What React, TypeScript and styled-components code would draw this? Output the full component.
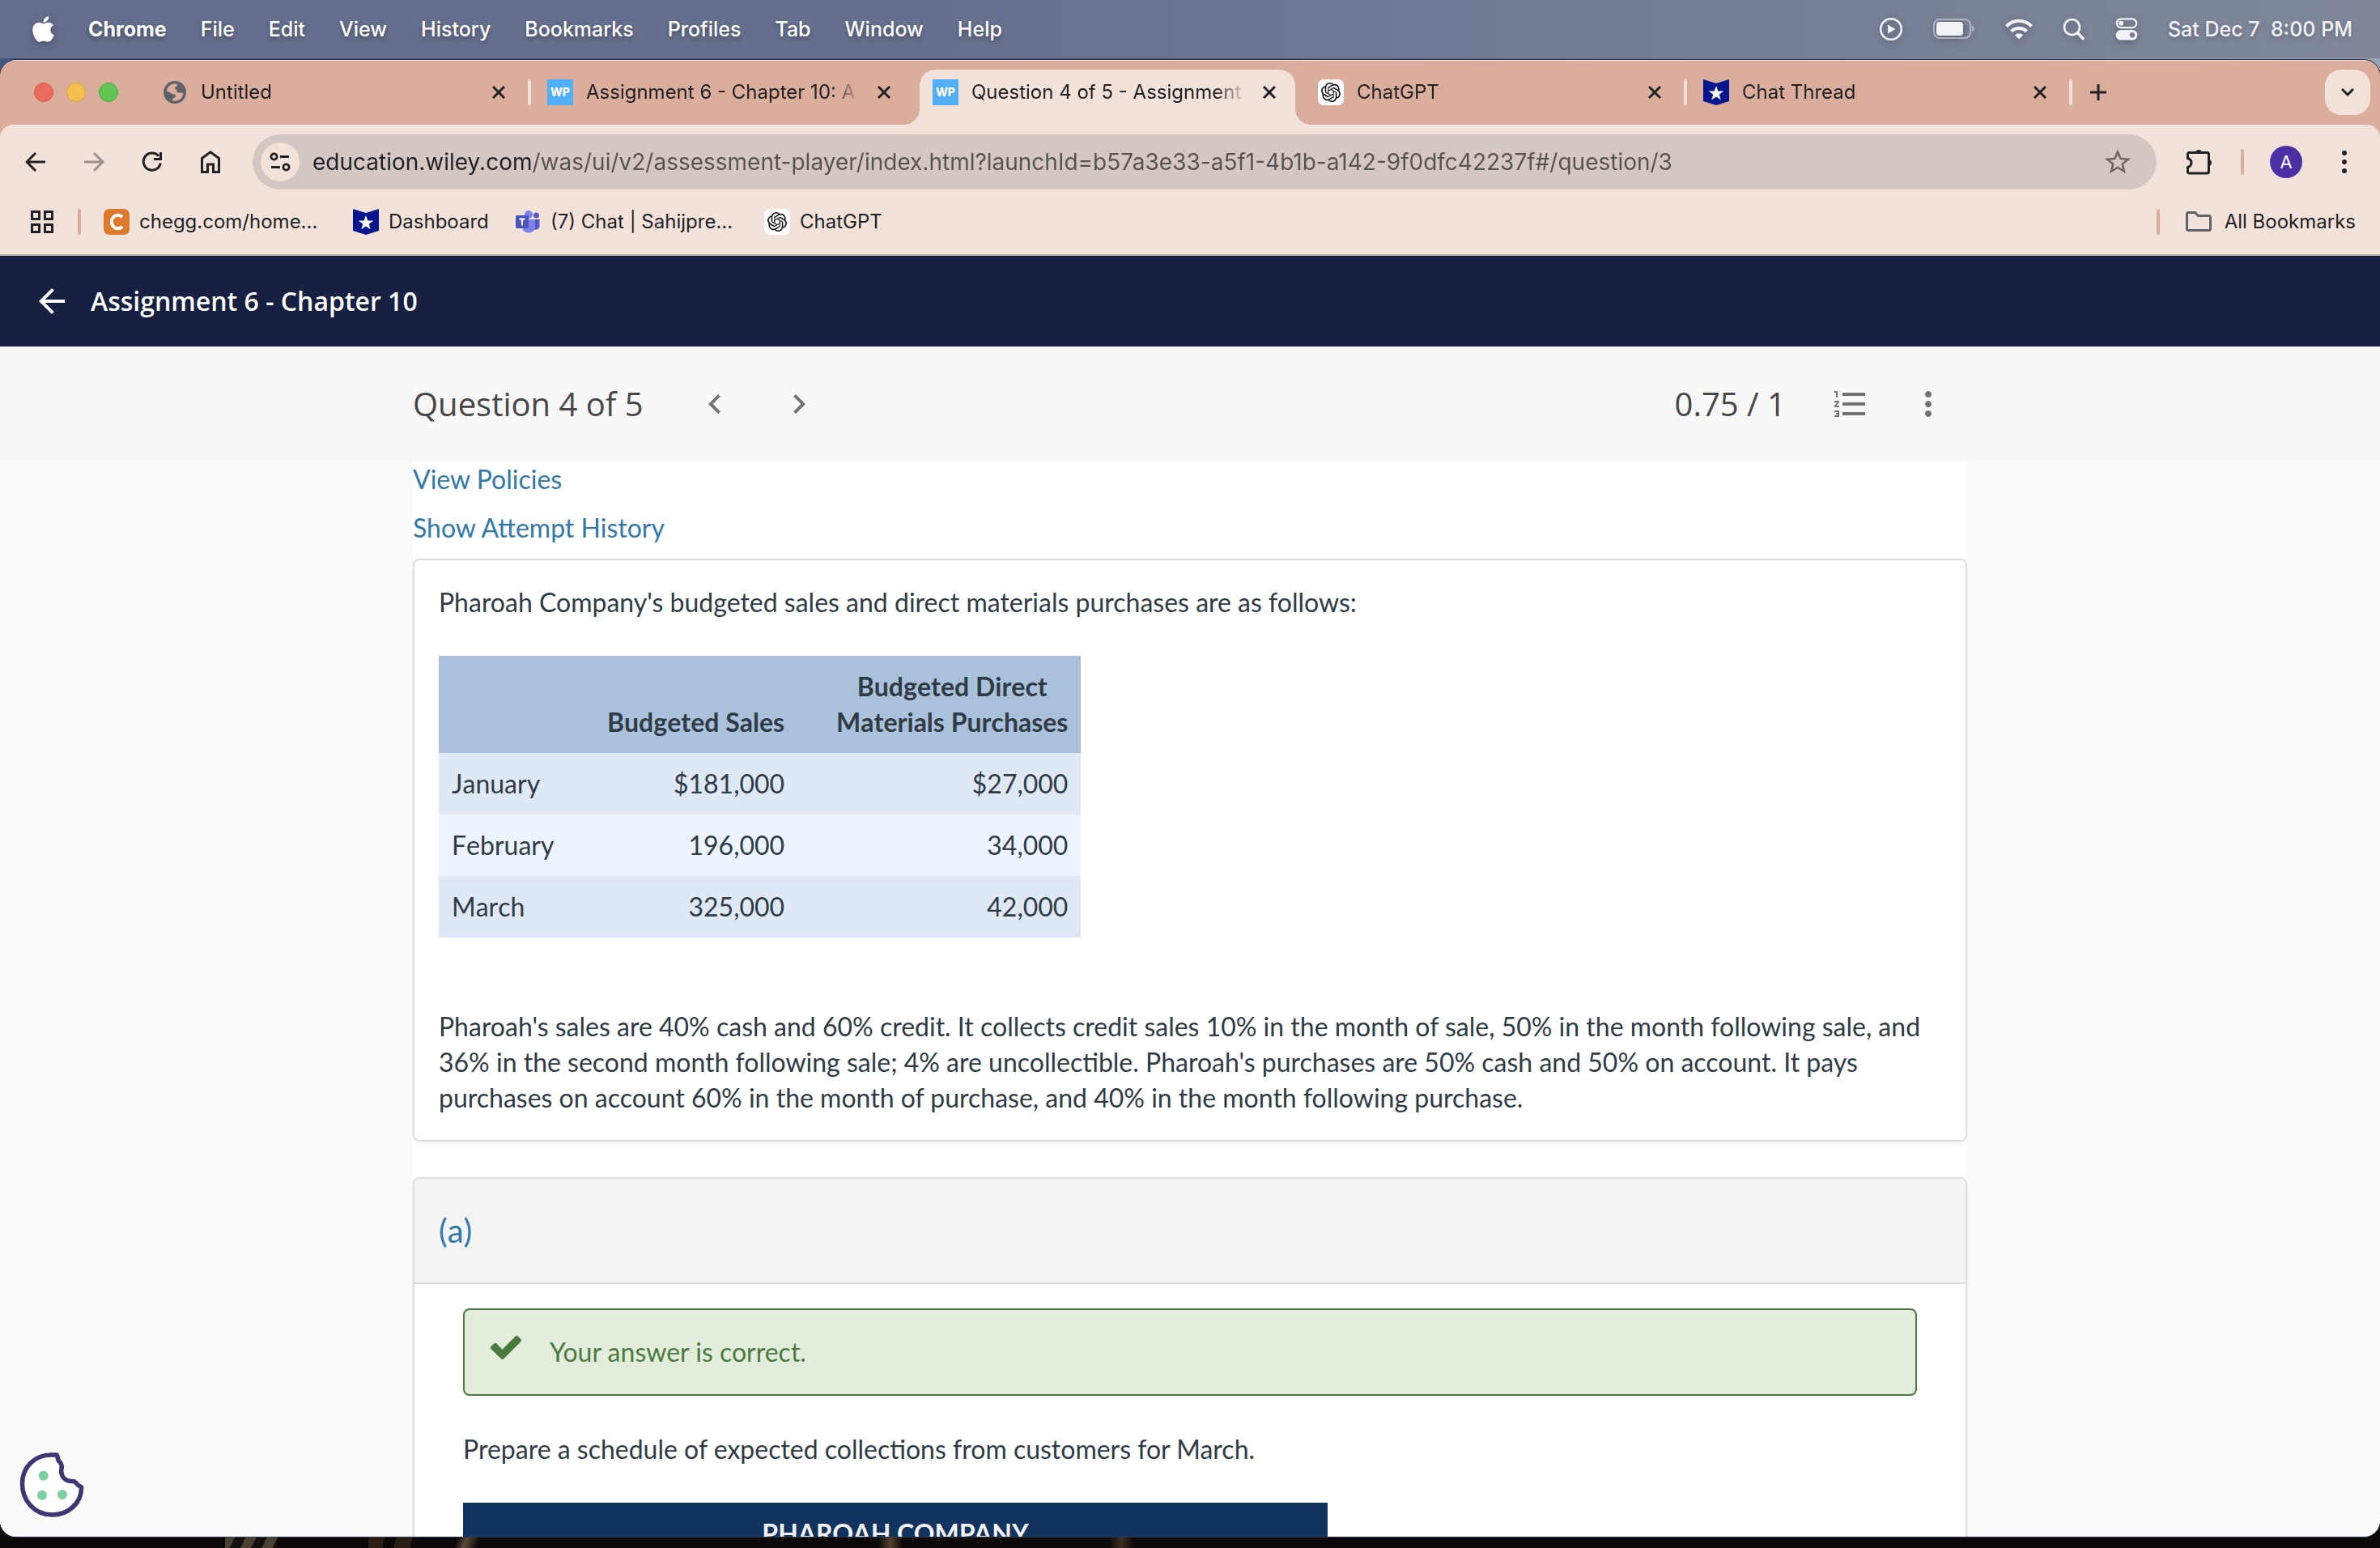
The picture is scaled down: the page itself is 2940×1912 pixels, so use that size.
import React from "react";
import styled, { createGlobalStyle, css } from "styled-components";
import { FaApple } from "react-icons/fa";
import {
  MdArrowBack,
  MdChevronLeft,
  MdChevronRight,
  MdFormatListNumbered,
  MdMoreVert,
  MdStarBorder,
} from "react-icons/md";
import { SiOpenai } from "react-icons/si";

const color = {
  strip: "#dbad9c",
  toolbar: "#f3e2da",
  omnibox: "#d4c6c0",
  ink: "#202124",
  navy: "#171f42",
  link: "#3079ab",
  text: "#2f3b45",
  rule: "#dddddd",
  success: "#4b7a41",
};

const GlobalStyle = createGlobalStyle`
  *, *::before, *::after { box-sizing: border-box; }
  html, body { margin: 0; }
  body { overflow: hidden; }
  svg { display: block; flex: none; }
  button, input { font: inherit; color: inherit; margin: 0; }
  a { text-decoration: none; }
`;

const Desktop = styled.div`
  display: flex;
  flex-direction: column;
  height: 100vh;
  font-family: Inter, "Liberation Sans", sans-serif;
  background:
    repeating-linear-gradient(115deg, #4a4033 0 12px, #15110d 12px 24px) 278px 100% / 64px 16px no-repeat,
    repeating-linear-gradient(100deg, #2b1e16 0 20px, #0d0908 20px 34px) 455px 100% / 60px 16px no-repeat,
    linear-gradient(110deg, #0d0908 30%, #5b4a38 50%, #0d0908 80%) 550px 100% / 50px 16px no-repeat,
    linear-gradient(90deg, #0d0908, #54412f, #0d0908) 1085px 100% / 30px 16px no-repeat,
    linear-gradient(90deg, #0d0908, #3d2f24, #0d0908) 1370px 100% / 30px 16px no-repeat,
    linear-gradient(#0b0807, #0b0807) 0 100% / 100% 50% no-repeat,
    linear-gradient(90deg, #3f5686, #4b5570 50%, #98a2b0);
`;

/* ---------- macOS menu bar ---------- */

const MenuBar = styled.header`
  display: flex;
  align-items: center;
  justify-content: space-between;
  height: 72px;
  padding: 0 34px 0 40px;
  color: #fff;
  font-size: 25px;
  line-height: 32px;
  background: linear-gradient(90deg, #646d8b 0%, #676f8e 40%, #757d96 70%, #7f8799 100%);
  svg { filter: drop-shadow(0 3px 4px rgba(0, 0, 0, 0.25)); }
`;

const Menus = styled.nav`
  display: flex;
  align-items: center;
  gap: 42px;
`;

const AppleLogo = styled(FaApple)`
  width: 27px;
  height: 36px;
`;

const MenuItem = styled.button<{ $app?: boolean }>`
  padding: 0;
  border: 0;
  background: none;
  font-weight: ${(p) => (p.$app ? 700 : 500)};
  text-shadow: 0 3px 5px rgba(0, 0, 0, 0.3);
`;

const StatusItems = styled.div`
  display: flex;
  align-items: center;
  gap: 37px;
  color: #f1f2f5;
`;

const Clock = styled.time`
  font-weight: 500;
  white-space: pre;
  text-shadow: 0 3px 5px rgba(0, 0, 0, 0.2);
`;

/* ---------- browser window ---------- */

const BrowserWindow = styled.div`
  position: relative;
  display: flex;
  flex: 1;
  flex-direction: column;
  min-height: 0;
  margin: 2px 0 14px;
  overflow: hidden;
  border-radius: 20px;
  background: ${color.strip};
  box-shadow: 0 0 0 1px #2b3450;
`;

const TabStrip = styled.div`
  display: flex;
  align-items: center;
  height: 80px;
  padding: 0 12px 0 42px;
  box-shadow: inset 0 2px 0 -1px #f6e6df;
`;

const TrafficLights = styled.div`
  display: flex;
  gap: 16px;
  width: 138px;
`;

const Light = styled.button<{ $fill: string; $edge: string }>`
  width: 24px;
  height: 24px;
  padding: 0;
  border: 1px solid ${(p) => p.$edge};
  border-radius: 50%;
  background: ${(p) => p.$fill};
`;

const Tabs = styled.div`
  display: flex;
  flex: 0 1 2380px;
  align-self: stretch;
  min-width: 0;
`;

const Tab = styled.div<{ $active?: boolean; $rule?: boolean }>`
  position: relative;
  display: flex;
  flex: 1 1 0;
  align-items: center;
  gap: 16px;
  min-width: 0;
  padding: 0 28px 0 20px;
  color: ${color.ink};
  font-size: 24px;
  line-height: 32px;
  ${(p) =>
    p.$rule &&
    css`
      &::after {
        content: "";
        position: absolute;
        right: 0;
        width: 4px;
        height: 32px;
        border-radius: 2px;
        background: ${color.toolbar};
      }
    `}
  ${(p) =>
    p.$active &&
    css`
      &::before {
        content: "";
        position: absolute;
        inset: 12px 8px 0 4px;
        border-radius: 20px 20px 0 0;
        background: ${color.toolbar};
      }
    `}
`;

const Flare = styled.span<{ $side: "left" | "right" }>`
  position: absolute;
  bottom: 0;
  ${(p) => (p.$side === "left" ? "left: -16px;" : "right: -12px;")}
  width: 20px;
  height: 20px;
  background: radial-gradient(
    circle at ${(p) => (p.$side === "left" ? "0 0" : "100% 0")},
    transparent 20px,
    ${color.toolbar} 20px
  );
`;

const TabTitle = styled.span`
  position: relative;
  flex: 1;
  min-width: 0;
  overflow: hidden;
  white-space: nowrap;
  mask-image: linear-gradient(90deg, #000 calc(100% - 40px), transparent);
`;

const IconButton = styled.button<{ $w: number; $h?: number }>`
  position: relative;
  display: flex;
  flex: none;
  align-items: center;
  justify-content: center;
  width: ${(p) => p.$w}px;
  height: ${(p) => p.$h ?? p.$w}px;
  padding: 0;
  border: 0;
  background: none;
`;

const TabSearch = styled(IconButton)`
  margin-left: auto;
  border-radius: 20px;
  background: ${color.toolbar};
`;

const FaviconBox = styled.span<{ $bg?: string; $radius?: number }>`
  position: relative;
  display: flex;
  flex: none;
  align-items: center;
  justify-content: center;
  width: 32px;
  height: 32px;
  border-radius: ${(p) => p.$radius ?? 0}px;
  background: ${(p) => p.$bg ?? "transparent"};
  color: #fff;
  font-size: 14px;
  font-weight: 800;
  line-height: 32px;
`;

const Chrome = styled.div`
  flex: none;
  border-bottom: 2px solid #c4b3ab;
  border-radius: 16px 16px 0 0;
  background: ${color.toolbar};
  color: ${color.ink};
`;

const Toolbar = styled.div`
  display: flex;
  align-items: center;
  padding: 12px 8px;
`;

const Omnibox = styled.div`
  display: flex;
  flex: 1;
  align-items: center;
  gap: 16px;
  height: 68px;
  margin: 0 16px;
  padding: 0 24px 0 10px;
  border-radius: 34px;
  background: ${color.omnibox};
`;

const SiteInfo = styled(IconButton)`
  border-radius: 50%;
  background: ${color.toolbar};
`;

const Address = styled.input`
  flex: 1;
  min-width: 0;
  height: 40px;
  padding: 0;
  border: 0;
  outline: 0;
  color: transparent;
  font-size: 28px;
  line-height: 40px;
  background: linear-gradient(90deg, ${color.ink} 271px, #56524f 271px);
  background-clip: text;
`;

const Rule = styled.span<{ $margin: string }>`
  flex: none;
  width: 4px;
  height: 32px;
  margin: ${(p) => p.$margin};
  border-radius: 2px;
  background: ${color.strip};
`;

const Avatar = styled.span`
  width: 40px;
  height: 40px;
  border-radius: 50%;
  background: #4c2fa5;
  color: #fff;
  font-size: 22px;
  line-height: 40px;
  text-align: center;
`;

const BookmarksBar = styled.nav`
  display: flex;
  align-items: center;
  height: 68px;
  padding: 0 30px 12px 24px;
  font-size: 24px;
  line-height: 32px;
`;

const Bookmark = styled.a<{ $w?: number }>`
  display: flex;
  align-items: center;
  gap: 12px;
  width: ${(p) => (p.$w ? `${p.$w}px` : "auto")};
  color: ${color.ink};
  white-space: nowrap;
`;

const AllBookmarks = styled.button`
  display: flex;
  align-items: center;
  gap: 16px;
  padding: 0;
  border: 0;
  background: none;
`;

/* ---------- assessment page ---------- */

const Page = styled.div`
  display: flex;
  flex: 1;
  flex-direction: column;
  min-height: 0;
  overflow: hidden;
  background: #fafafa;
`;

const CourseBar = styled.header`
  display: flex;
  flex: none;
  align-items: center;
  gap: 24px;
  height: 112px;
  padding: 0 40px;
  background: ${color.navy};
  color: #fff;
  font-family: "Open Sans", "Noto Sans", sans-serif;
`;

const CourseTitle = styled.h1`
  margin: 0;
  font-size: 32px;
  font-weight: 600;
  line-height: 44px;
`;

const QuestionBar = styled.div`
  flex: none;
  background: #f8f8f8;
  color: #737373;
`;

const Column = styled.div`
  width: 100%;
  max-width: 1920px;
  margin: 0 auto;
`;

const QuestionRow = styled(Column)`
  display: flex;
  align-items: center;
  height: 142px;
  padding-right: 24px;
`;

const Heading = styled.h2`
  margin: 0;
  color: #474747;
  font-family: "Open Sans", "Noto Sans", sans-serif;
  font-size: 40px;
  font-weight: 400;
  line-height: 56px;
`;

const Pager = styled.div`
  display: flex;
  gap: 56px;
  margin-left: 64px;
`;

const Tools = styled.div`
  display: flex;
  align-items: center;
  gap: 48px;
  margin-left: auto;
`;

const Score = styled(Heading).attrs({ as: "p" })`
  margin-right: 8px;
`;

const Content = styled(Column).attrs({ as: "main" })`
  flex: 1 0 auto;
  background: #fff;
  color: ${color.text};
  font-family: Lato, "Open Sans", sans-serif;
  font-size: 32px;
  line-height: 44px;
`;

const Links = styled.div`
  display: flex;
  flex-direction: column;
  align-items: flex-start;
  gap: 16px;
  padding-bottom: 16px;
`;

const PageLink = styled.a`
  color: ${color.link};
`;

const Card = styled.section`
  border: 2px solid ${color.rule};
  border-radius: 8px;
  box-shadow: 0 2px 4px rgba(0, 0, 0, 0.05);
  overflow: hidden;
`;

const QuestionCard = styled(Card)`
  margin-bottom: 44px;
  padding: 30px;
`;

const Text = styled.p`
  margin: 0;
`;

const DataTable = styled.table`
  margin: 44px 0 88px;
  border-collapse: collapse;
  font-kerning: none;
  th, td { padding: 16px; }
  thead { background: #abc1db; }
  thead th { vertical-align: bottom; text-align: right; font-weight: 700; }
  thead th + th + th { padding-left: 48px; }
  thead span { display: inline-block; text-align: center; vertical-align: top; }
  tbody tr { background: #dfe9f6; }
  tbody tr:nth-child(even) { background: #edf4ff; }
  tbody th { width: 192px; text-align: left; font-weight: 400; }
  td { text-align: right; }
`;

const PartHeader = styled.h3`
  margin: 0;
  padding: 36px 30px;
  border-bottom: 2px solid ${color.rule};
  background: #f4f4f4;
  color: ${color.link};
  font-size: 40px;
  font-kerning: none;
  font-weight: 400;
  line-height: 56px;
`;

const PartBody = styled.div`
  padding: 30px 60px;
`;

const Alert = styled.div`
  display: flex;
  align-items: flex-start;
  gap: 35px;
  margin-bottom: 44px;
  padding: 30px 32px;
  border: 2px solid ${color.success};
  border-radius: 8px;
  background: #e2eedb;
  color: ${color.success};
`;

const AnswerTable = styled.table`
  width: 1068px;
  margin-top: 44px;
  border-collapse: collapse;
  background: #12325f;
  color: #f2f2f2;
  th { padding: 16px; font-weight: 700; }
`;

const CookieButton = styled.button`
  position: absolute;
  bottom: 24px;
  left: 24px;
  padding: 0;
  border: 0;
  background: none;
`;

/* ---------- drawings ---------- */

type StrokeProps = { size: number; d: string; width?: number; stroke?: string };

const Stroke = ({ size, d, width = 3, stroke = "currentColor" }: StrokeProps) => (
  <svg width={size} height={size} viewBox={`0 0 ${size} ${size}`} fill="none" stroke={stroke} strokeWidth={width}>
    <path d={d} />
  </svg>
);

const CloseIcon = () => <Stroke size={16} d="M1 1L15 15M15 1L1 15" />;

const GlobeIcon = () => (
  <svg width="28" height="28" viewBox="0 0 28 28">
    <circle cx="14" cy="14" r="14" fill="#5f6368" />
    <path
      d="M4 13C4 8 8 3.500 14 3.500C16 3.500 17 4 17 5C17 7.500 14 6.500 14 9C14 10.500 16.500 10 16.500 12C16.500 14.500 18 15 20 14.500C22 14 22.500 15.500 24.500 15C24 20.500 19.500 24.800 14 24.800C11.500 24.800 11 24 11 22.500C11 21 15 21 15 18.500C15 16 12 17 9.500 15.500C8 14 6 13.300 4 13Z"
      fill={color.strip}
    />
  </svg>
);

const ShieldIcon = () => (
  <svg width="32" height="32" viewBox="0 0 32 32">
    <path d="M0 0L16 5L32 0V27L16 32L0 27Z" fill="#06168f" />
    <path d="M16 8L18.300 14.600H25.200L19.700 18.800L21.700 25.200L16 21.400L10.300 25.200L12.300 18.800L6.800 14.600H13.700Z" fill="#fff" />
  </svg>
);

const TeamsIcon = () => (
  <svg width="32" height="32" viewBox="0 0 32 32">
    <circle cx="26.500" cy="8" r="3.500" fill="#5059c9" />
    <path d="M20 13H30.500V21C30.500 27 22 27 20 22Z" fill="#5059c9" />
    <circle cx="17" cy="7" r="5" fill="#7b83eb" />
    <path d="M9 13H25V22C25 32 9 32 9 22Z" fill="#7b83eb" />
    <rect x="1" y="8" width="16" height="16" rx="1.500" fill="#4b53bc" />
    <path d="M5.500 12.500H12.500M9 12.500V20.500" stroke="#fff" strokeWidth="2" />
  </svg>
);

const CheggIcon = () => (
  <svg width="32" height="32" viewBox="0 0 32 32">
    <rect width="32" height="32" rx="7" fill="#dd7a2d" />
    <path d="M23 10A7.800 8.300 0 1 0 23 22" fill="none" stroke="#fff" strokeWidth="4" />
  </svg>
);

const OpenAiFavicon = () => (
  <FaviconBox $bg="#fff" $radius={7}>
    <SiOpenai size={24} color="#111" />
  </FaviconBox>
);

const WileyFavicon = () => <FaviconBox $bg="#52aef5">WP</FaviconBox>;

const PlayIcon = () => (
  <svg width="30" height="30" viewBox="0 0 30 30">
    <circle cx="15" cy="15" r="12.800" fill="none" stroke="currentColor" strokeWidth="2.600" />
    <path d="M11 9.500V20.500L20.500 15Z" fill="currentColor" />
  </svg>
);

const BatteryIcon = () => (
  <svg width="52" height="26" viewBox="0 0 52 26">
    <rect x="1" y="1" width="45" height="23" rx="7" fill="none" stroke="currentColor" strokeOpacity="0.5" strokeWidth="2" />
    <rect x="4" y="4" width="33" height="17" rx="4" fill="currentColor" />
    <path d="M48 8.500C51.500 10 51.500 15 48 16.500Z" fill="currentColor" fillOpacity="0.5" />
  </svg>
);

const WifiIcon = () => (
  <svg width="34" height="26" viewBox="0 0 34 26" fill="none" stroke="currentColor" strokeWidth="4.200">
    <path d="M1.500 9.500C10 .500 24 .500 32.500 9.500" />
    <path d="M7.500 15.800C12.500 10.500 21.500 10.500 26.500 15.800" />
    <path d="M12 20.500C14.500 17.500 19.500 17.500 22 20.500L17 25.500Z" fill="currentColor" stroke="none" />
  </svg>
);

const SearchIcon = () => (
  <svg width="28" height="28" viewBox="0 0 28 28" fill="none" stroke="currentColor" strokeLinecap="round">
    <circle cx="11.500" cy="11.500" r="9.500" strokeWidth="2.600" />
    <path d="M18.500 18.500L25 25.500" strokeWidth="3.600" />
  </svg>
);

const ControlCentreIcon = () => (
  <svg width="28" height="28" viewBox="0 0 28 28">
    <rect x="1.800" y="1.300" width="24.400" height="10.800" rx="5.400" fill="none" stroke="currentColor" strokeWidth="2.200" />
    <circle cx="7.200" cy="6.700" r="3" fill="currentColor" />
    <rect x=".7" y="15" width="26.600" height="12.600" rx="6.300" fill="currentColor" />
    <circle cx="21" cy="21.300" r="3.200" fill="#7b8297" />
  </svg>
);

const ReloadIcon = () => (
  <svg width="28" height="28" viewBox="0 0 28 28">
    <path d="M24.300 15.500A10.600 10.600 0 1 1 22 6.800" fill="none" stroke="currentColor" strokeWidth="3" />
    <path d="M26 2V12H16V9H23V2Z" fill="currentColor" />
  </svg>
);

const HomeIcon = () => (
  <svg width="28" height="30" viewBox="0 0 28 30" fill="none" stroke="currentColor" strokeWidth="3">
    <path d="M3.500 27.500V10.500L14 2.800L24.500 10.500V27.500H17.500V18H10.500V27.500Z" />
  </svg>
);

const TuneIcon = () => (
  <svg width="28" height="28" viewBox="0 0 28 28" fill="none" stroke="currentColor" strokeWidth="2.800">
    <circle cx="6.500" cy="7.500" r="3.600" />
    <path d="M14 7.500H25M3 20.500H14" />
    <circle cx="21.500" cy="20.500" r="3.600" />
  </svg>
);

const PuzzleIcon = () => (
  <svg width="36" height="36" viewBox="0 0 36 36">
    <path
      d="M4.500 6.500H28.500Q30.500 6.500 30.500 8.500V30Q30.500 32 28.500 32H6.500Q4.500 32 4.500 30V24.500Q9 23 9 19Q9 15 4.500 13.500V8.500Q4.500 6.500 6.500 6.500Z"
      fill="none"
      stroke="currentColor"
      strokeWidth="3"
    />
    <path d="M14 6A4.200 4.200 0 0 1 22 6Z M31 15A4.200 4.200 0 0 1 31 23Z" fill="currentColor" />
  </svg>
);

const KebabIcon = () => (
  <svg width="28" height="28" viewBox="0 0 28 28" fill="currentColor">
    <circle cx="14" cy="3" r="3" />
    <circle cx="14" cy="14" r="3" />
    <circle cx="14" cy="25" r="3" />
  </svg>
);

const AppsIcon = () => (
  <svg width="28" height="28" viewBox="0 0 28 28" fill="none" stroke="currentColor" strokeWidth="3">
    <path d="M1.500 1.500H10.500V10.500H1.500ZM17.500 1.500H26.500V10.500H17.500ZM1.500 17.500H10.500V26.500H1.500ZM17.500 17.500H26.500V26.500H17.500Z" />
  </svg>
);

const FolderIcon = () => (
  <svg width="32" height="26" viewBox="0 0 32 26" fill="none" stroke="#5f6368" strokeWidth="3">
    <path d="M3.500 1.500H11.500L15.500 5.500H28.500Q30.500 5.500 30.500 7.500V22Q30.500 23.500 28.500 23.500H3.500Q1.500 23.500 1.500 22V3.500Q1.500 1.500 3.500 1.500Z" />
  </svg>
);

const CheckIcon = () => (
  <svg width="38" height="34" viewBox="121 255 1550 1387" fill="currentColor">
    <path d="M1671 566q0 40-28 68l-724 724-136 136q-28 28-68 28t-68-28l-136-136-362-362q-28-28-28-68t28-68l136-136q28-28 68-28t68 28l294 295 656-657q28-28 68-28t68 28l136 136q28 28 28 68z" />
  </svg>
);

const CookieIcon = () => (
  <svg width="80" height="80" viewBox="0 0 80 80">
    <path
      d="M39.300 3H46C47.500 3.500 46.500 7 48 9.500C49.500 12 52.300 13.500 52.300 17C52.300 19.500 51.500 21 51.700 24.300C52.500 30.500 57 35 63 35.500C65.500 35.700 67.500 35 69.500 37C71 40 74 41 76.500 43C77 62 61 77 40.300 77C18 77 3.500 59 3.500 38.500C3.500 18 19 3 39.300 3Z"
      fill="#fff"
      stroke="#3d3873"
      strokeWidth="5.600"
      strokeLinejoin="round"
    />
    <g fill="#79d19f">
      <circle cx="29.700" cy="28.700" r="6" />
      <circle cx="28" cy="52.700" r="6" />
      <circle cx="53" cy="52" r="6" />
    </g>
  </svg>
);

/* ---------- data ---------- */

const menus = ["File", "Edit", "View", "History", "Bookmarks", "Profiles", "Tab", "Window", "Help"];

const tabs = [
  { title: "Untitled", icon: <GlobeIcon />, rule: true },
  { title: "Assignment 6 - Chapter 10: A", icon: <WileyFavicon /> },
  { title: "Question 4 of 5 - Assignment", icon: <WileyFavicon />, active: true },
  { title: "ChatGPT", icon: <OpenAiFavicon />, rule: true },
  { title: "Chat Thread", icon: <ShieldIcon />, rule: true },
];

const bookmarks = [
  { title: "chegg.com/home...", icon: <CheggIcon />, width: 308 },
  { title: "Dashboard", icon: <ShieldIcon />, width: 200 },
  { title: "(7) Chat | Sahijpre...", icon: <TeamsIcon />, width: 308 },
  { title: "ChatGPT", icon: <OpenAiFavicon /> },
];

const budget = [
  ["January", "$181,000", "$27,000"],
  ["February", "196,000", "34,000"],
  ["March", "325,000", "42,000"],
];

export default function App() {
  return (
    <Desktop>
      <GlobalStyle />
      <MenuBar>
        <Menus aria-label="Menu bar">
          <AppleLogo />
          <MenuItem $app>Chrome</MenuItem>
          {menus.map((m) => (
            <MenuItem key={m}>{m}</MenuItem>
          ))}
        </Menus>
        <StatusItems>
          <PlayIcon />
          <BatteryIcon />
          <WifiIcon />
          <SearchIcon />
          <ControlCentreIcon />
          <Clock>Sat Dec 7  8:00 PM</Clock>
        </StatusItems>
      </MenuBar>

      <BrowserWindow>
        <TabStrip>
          <TrafficLights>
            <Light aria-label="Close window" $fill="#ed6a5e" $edge="#d5584c" />
            <Light aria-label="Minimise window" $fill="#f5bf4f" $edge="#d8a23c" />
            <Light aria-label="Zoom window" $fill="#61c554" $edge="#4ba93e" />
          </TrafficLights>
          <Tabs>
            {tabs.map((t) => (
              <Tab key={t.title} $active={t.active} $rule={t.rule}>
                {t.active && (
                  <>
                    <Flare $side="left" />
                    <Flare $side="right" />
                  </>
                )}
                <FaviconBox>{t.icon}</FaviconBox>
                <TabTitle>{t.title}</TabTitle>
                <IconButton $w={24} aria-label={`Close ${t.title}`}>
                  <CloseIcon />
                </IconButton>
              </Tab>
            ))}
          </Tabs>
          <IconButton $w={64} aria-label="New tab">
            <Stroke size={20} d="M10 0V20M0 10H20" stroke={color.ink} />
          </IconButton>
          <TabSearch $w={56} aria-label="Search tabs">
            <Stroke size={18} d="M2 5L9 12L16 5" stroke={color.ink} />
          </TabSearch>
        </TabStrip>

        <Chrome>
          <Toolbar>
            <IconButton $w={72} $h={68} aria-label="Back">
              <Stroke size={26} d="M25 13H3M13 2L2 13L13 24" />
            </IconButton>
            <IconButton $w={72} $h={68} aria-label="Forward">
              <Stroke size={26} d="M1 13H23M13 2L24 13L13 24" stroke="#9b908c" />
            </IconButton>
            <IconButton $w={72} $h={68} aria-label="Reload">
              <ReloadIcon />
            </IconButton>
            <IconButton $w={72} $h={68} aria-label="Home">
              <HomeIcon />
            </IconButton>
            <Omnibox>
              <SiteInfo $w={48} aria-label="View site information">
                <TuneIcon />
              </SiteInfo>
              <Address
                aria-label="Address"
                spellCheck={false}
                defaultValue="education.wiley.com/was/ui/v2/assessment-player/index.html?launchId=b57a3e33-a5f1-4b1b-a142-9f0dfc42237f#/question/3"
              />
              <IconButton $w={48} aria-label="Bookmark this tab">
                <MdStarBorder size={38} color="#6b6664" />
              </IconButton>
            </Omnibox>
            <IconButton $w={72} $h={68} aria-label="Extensions">
              <PuzzleIcon />
            </IconButton>
            <Rule $margin="0 16px" />
            <IconButton $w={72} $h={68} aria-label="Profile">
              <Avatar>A</Avatar>
            </IconButton>
            <IconButton $w={72} $h={68} aria-label="Customise and control">
              <KebabIcon />
            </IconButton>
          </Toolbar>
          <BookmarksBar aria-label="Bookmarks">
            <IconButton $w={56} aria-label="Apps">
              <AppsIcon />
            </IconButton>
            <Rule $margin="0 28px 0 16px" />
            {bookmarks.map((b) => (
              <Bookmark key={b.title} href="#" $w={b.width}>
                {b.icon}
                {b.title}
              </Bookmark>
            ))}
            <Rule $margin="0 32px 0 auto" />
            <AllBookmarks>
              <FolderIcon />
              All Bookmarks
            </AllBookmarks>
          </BookmarksBar>
        </Chrome>

        <Page>
          <CourseBar>
            <IconButton $w={48} aria-label="Back to course">
              <MdArrowBack size={48} />
            </IconButton>
            <CourseTitle>Assignment 6 - Chapter 10</CourseTitle>
          </CourseBar>
          <QuestionBar>
            <QuestionRow>
              <Heading>Question 4 of 5</Heading>
              <Pager>
                <IconButton $w={48} aria-label="Previous question">
                  <MdChevronLeft size={48} />
                </IconButton>
                <IconButton $w={48} aria-label="Next question">
                  <MdChevronRight size={48} />
                </IconButton>
              </Pager>
              <Tools>
                <Score>0.75 / 1</Score>
                <IconButton $w={48} aria-label="Question list">
                  <MdFormatListNumbered size={48} />
                </IconButton>
                <IconButton $w={48} aria-label="More options">
                  <MdMoreVert size={48} />
                </IconButton>
              </Tools>
            </QuestionRow>
          </QuestionBar>

          <Content>
            <Links>
              <PageLink href="#">View Policies</PageLink>
              <PageLink href="#">Show Attempt History</PageLink>
            </Links>
            <QuestionCard>
              <Text>Pharoah Company's budgeted sales and direct materials purchases are as follows:</Text>
              <DataTable>
                <thead>
                  <tr>
                    <th />
                    <th scope="col">Budgeted Sales</th>
                    <th scope="col">
                      <span>
                        Budgeted Direct
                        <br />
                        Materials Purchases
                      </span>
                    </th>
                  </tr>
                </thead>
                <tbody>
                  {budget.map(([month, sales, purchases]) => (
                    <tr key={month}>
                      <th scope="row">{month}</th>
                      <td>{sales}</td>
                      <td>{purchases}</td>
                    </tr>
                  ))}
                </tbody>
              </DataTable>
              <Text>
                Pharoah's sales are 40% cash and 60% credit. It collects credit sales 10% in the month of sale, 50% in
                the month following sale, and 36% in the second month following sale; 4% are uncollectible. Pharoah's
                purchases are 50% cash and 50% on account. It pays purchases on account 60% in the month of purchase,
                and 40% in the month following purchase.
              </Text>
            </QuestionCard>
            <Card>
              <PartHeader>(a)</PartHeader>
              <PartBody>
                <Alert role="status">
                  <CheckIcon />
                  Your answer is correct.
                </Alert>
                <Text>Prepare a schedule of expected collections from customers for March.</Text>
                <AnswerTable>
                  <thead>
                    <tr>
                      <th>PHAROAH COMPANY</th>
                    </tr>
                  </thead>
                </AnswerTable>
              </PartBody>
            </Card>
          </Content>
        </Page>
        <CookieButton aria-label="Cookie preferences">
          <CookieIcon />
        </CookieButton>
      </BrowserWindow>
    </Desktop>
  );
}
